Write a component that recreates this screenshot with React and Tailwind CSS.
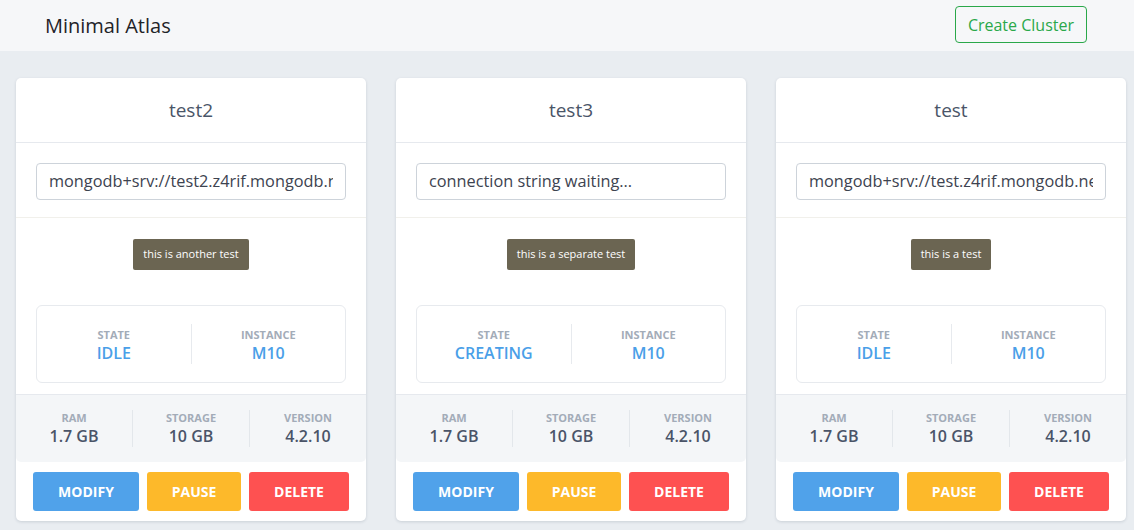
import React from "react";

const clusters = [
  { name: "test2", conn: "mongodb+srv://test2.z4rif.mongodb.net", tag: "this is another test", state: "IDLE" },
  { name: "test3", conn: "connection string waiting...", tag: "this is a separate test", state: "CREATING" },
  { name: "test", conn: "mongodb+srv://test.z4rif.mongodb.net", tag: "this is a test", state: "IDLE" },
];

function Card({ c }) {
  return (
    <div className="w-[350px] shrink-0 bg-white rounded-[5px] shadow-[0_1px_3px_rgba(60,75,100,0.18)] flex flex-col">
      <div className="h-[64px] flex items-center justify-center border-b border-[#e6e9ee] text-[19px] text-[#4a5568] box-content">
        {c.name}
      </div>
      <div className="pt-[20px] pb-[17px] px-[20px] border-b border-[#f1f0eb]">
        <div className="h-[37px] w-[310px] border border-[#cdd3da] rounded-[4px] px-[12px] flex items-center text-[16.3px] text-[#3d4350]">
          <div className="overflow-hidden whitespace-nowrap w-full">{c.conn}</div>
        </div>
      </div>
      <div className="pt-[21px] flex flex-col items-center">
        <div className="h-[31px] px-[10px] rounded-[2px] bg-[#6b6552] text-white text-[11px] flex items-center">
          {c.tag}
        </div>
      </div>
      <div className="mt-[35px] mx-[20px] h-[78px] border border-[#e7eaee] rounded-[6px] flex items-center">
        <div className="flex-1 flex flex-col items-center mt-[3px]">
          <div className="text-[11px] font-bold text-[#a3acb8] leading-[14px]">STATE</div>
          <div className="text-[16px] font-semibold text-[#4a9fe8] leading-[22px]">{c.state}</div>
        </div>
        <div className="w-px h-[40px] bg-[#e7eaee]" />
        <div className="flex-1 flex flex-col items-center mt-[3px]">
          <div className="text-[11px] font-bold text-[#a3acb8] leading-[14px]">INSTANCE</div>
          <div className="text-[16px] font-semibold text-[#4a9fe8] leading-[22px]">M10</div>
        </div>
      </div>
      <div className="mt-[11px] h-[68px] bg-[#f4f6f8] border-t border-[#e6e9ee] rounded-b-[5px] flex items-center">
        {[
          ["RAM", "1.7 GB"],
          ["STORAGE", "10 GB"],
          ["VERSION", "4.2.10"],
        ].map(([l, v], i) => (
          <React.Fragment key={l}>
            {i > 0 && <div className="w-px h-[37px] bg-[#e3e7eb]" />}
            <div className="flex-1 flex flex-col items-center">
              <div className="text-[11px] font-bold text-[#a3acb8] leading-[14px]">{l}</div>
              <div className="text-[16px] font-semibold text-[#4a5468] leading-[22px]">{v}</div>
            </div>
          </React.Fragment>
        ))}
      </div>
      <div className="pt-[10px] pb-[10px] pl-[17px] flex gap-[8px]">
        <button className="w-[106px] h-[39px] rounded-[3px] bg-[#50a2ea] text-white text-[14px] font-bold">MODIFY</button>
        <button className="w-[94px] h-[39px] rounded-[3px] bg-[#fdb92a] text-white text-[14px] font-bold">PAUSE</button>
        <button className="w-[100px] h-[39px] rounded-[3px] bg-[#fe5151] text-white text-[14px] font-bold">DELETE</button>
      </div>
    </div>
  );
}

export default function App() {
  return (
    <div className="w-[1134px] h-[530px] bg-[#e9edf1] overflow-hidden" style={{ fontFamily: '"Open Sans", sans-serif' }}>
      <div className="h-[51px] bg-[#f6f7f9] flex items-center justify-between pl-[45px] pr-[47px]">
        <div className="text-[20px] text-[#1f2328]">Minimal Atlas</div>
        <button className="h-[37px] px-[12px] border border-[#2aa84a] rounded-[4px] text-[#2aa84a] text-[16px] mt-[-2px]">Create Cluster</button>
      </div>
      <div className="pt-[27px] pl-[16px] flex gap-[30px]">
        {clusters.map((c) => (
          <Card key={c.name} c={c} />
        ))}
      </div>
    </div>
  );
}
